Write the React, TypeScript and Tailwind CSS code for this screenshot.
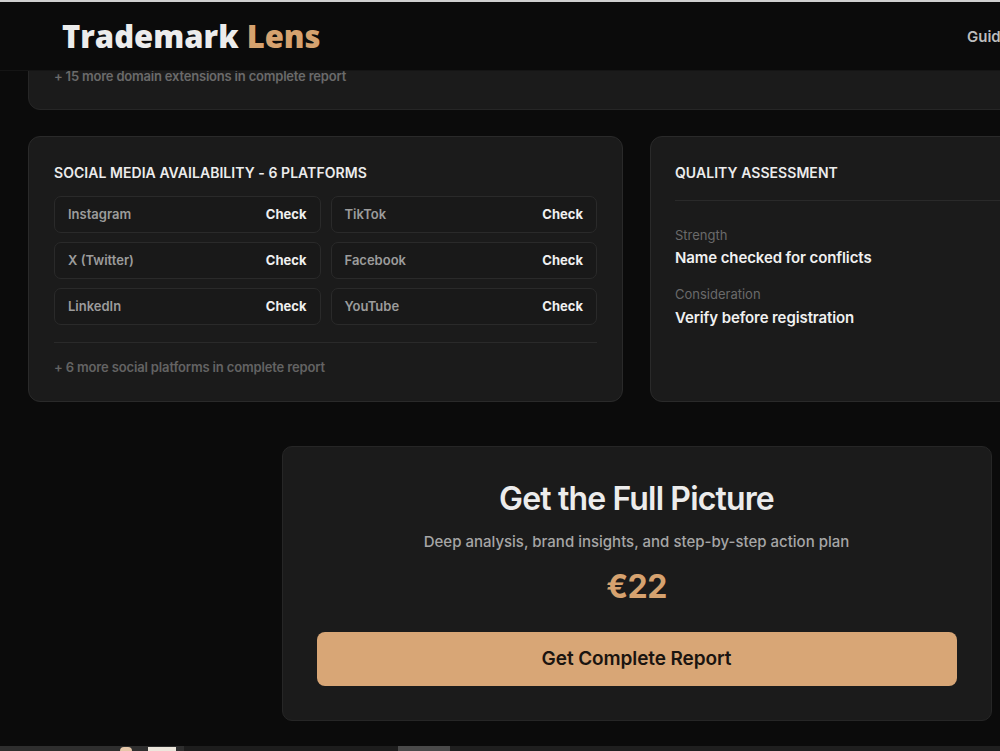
import React from "react";

const platforms = [
  ["Instagram", "TikTok"],
  ["X (Twitter)", "Facebook"],
  ["LinkedIn", "YouTube"],
];

function PlatformRow({ name }: { name: string }) {
  return (
    <div className="flex h-[37px] items-center justify-between rounded-[7px] border border-[#2a2a2a] bg-[#191919] pl-[13px] pr-[13px]">
      <span className="text-[13px] font-semibold text-[#9c9c9c]">{name}</span>
      <span className="text-[13px] font-bold text-[#f0f0f0]">Check</span>
    </div>
  );
}

export default function App() {
  return (
    <div
      className="relative flex h-[751px] w-[1000px] flex-col overflow-hidden bg-[#0b0b0b]"
      style={{ fontFamily: "Inter, 'Noto Sans', sans-serif" }}
    >
      {/* browser chrome edge */}
      <div className="h-[2px] w-full shrink-0 bg-[#cfcfcf]" />

      {/* top navigation */}
      <header className="relative z-10 flex h-[68px] w-[1273px] shrink-0 items-center bg-[#0b0b0b] pl-[62px] shadow-[0_1px_0_#151515]">
        <div className="w-[905px]">
          <span
            className="text-[31px] font-extrabold"
            style={{ fontFamily: "'Open Sans', Inter, sans-serif" }}
          >
            <span className="text-[#ececec]">Trademark</span>{" "}
            <span className="text-[#d6a26f]">Lens</span>
          </span>
        </div>
        <nav className="flex gap-8 pt-[2px] text-[15px] font-semibold text-[#bdbdbd]">
          <span>Guide</span>
          <span>Pricing</span>
        </nav>
      </header>

      <main className="-mt-[30px] flex w-[1273px] flex-1 flex-col px-[28px]">
        {/* domain card (scrolled under header) */}
        <section className="rounded-b-[12px] border border-[#262626] bg-[#1b1b1b] px-[25px] pb-[24px] pt-[26px]">
          <p className="text-[13px] font-semibold leading-[18px] tracking-[-0.2px] text-[#6a6a6a]">
            + 15 more domain extensions in complete report
          </p>
        </section>

        <div className="mt-[26px] grid grid-cols-2 gap-[27px]">
          {/* social media availability */}
          <section className="rounded-[12px] border border-[#2a2a2a] bg-[#1b1b1b] px-[25px] pb-[25px] pt-[26px]">
            <h2 className="text-[14px] font-semibold uppercase leading-[20px] tracking-[0.05px] text-[#ececec]">
              Social Media Availability - 6 Platforms
            </h2>
            <div className="mt-[13px] grid grid-cols-2 gap-x-[10px] gap-y-[9px]">
              {platforms.map(([a, b]) => (
                <React.Fragment key={a}>
                  <PlatformRow name={a} />
                  <PlatformRow name={b} />
                </React.Fragment>
              ))}
            </div>
            <div className="mt-[17px] border-t border-[#2a2a2a] pt-[15px]">
              <p className="text-[13px] font-semibold leading-[18px] tracking-[-0.15px] text-[#636363]">
                + 6 more social platforms in complete report
              </p>
            </div>
          </section>

          {/* quality assessment */}
          <section className="rounded-[12px] border border-[#2a2a2a] bg-[#1b1b1b] pl-[24px] pr-[25px] pt-[26px]">
            <h2 className="text-[14px] font-semibold uppercase leading-[20px] tracking-[0.05px] text-[#ececec]">
              Quality Assessment
            </h2>
            <div className="mt-[17px] border-t border-[#2a2a2a] pt-[25px]">
              <p className="text-[13px] leading-[18px] text-[#6a6a6a]">Strength</p>
              <p className="mt-[3px] text-[15px] font-semibold leading-[22px] tracking-[-0.1px] text-[#f0f0f0]">
                Name checked for conflicts
              </p>
              <p className="mt-[16px] text-[13px] leading-[18px] text-[#6a6a6a]">Consideration</p>
              <p className="mt-[4px] text-[15px] font-semibold leading-[22px] tracking-[-0.1px] text-[#f0f0f0]">
                Verify before registration
              </p>
            </div>
          </section>
        </div>

        {/* upsell */}
        <section className="mx-auto mt-[44px] flex w-[710px] flex-col items-center rounded-[10px] border border-[#262626] bg-[#1b1b1b] px-[34px] pb-[34px] pt-[32px]">
          <h2 className="text-[32px] font-semibold leading-[40px] tracking-[-0.85px] text-[#ececec]">
            Get the Full Picture
          </h2>
          <p className="mt-[12px] text-[15px] font-medium leading-[22px] text-[#a6a6a6]">
            Deep analysis, brand insights, and step-by-step action plan
          </p>
          <p className="mt-[12px] text-[32px] font-bold leading-[44px] tracking-[-0.5px] text-[#d6a26f]">
            €22
          </p>
          <button className="mt-[23px] flex h-[54px] w-full items-center justify-center rounded-[8px] bg-[#d8a676] text-[19px] font-semibold tracking-[-0.1px] text-[#1a1410]">
            Get Complete Report
          </button>
        </section>
      </main>

      {/* taskbar strip */}
      <div className="flex h-[5px] w-full shrink-0">
        <div className="relative flex w-[184px] items-start bg-[#2e2e2e]">
          <span className="ml-[120px] mt-[1px] h-[4px] w-[12px] rounded-t-full bg-[#e5c7a8]" />
          <span className="ml-[16px] mt-[1px] h-[4px] w-[28px] bg-[#ece6dc]" />
        </div>
        <div className="w-[214px] bg-[#1d1d1d]" />
        <div className="w-[52px] bg-[#4a4a4a]" />
        <div className="flex-1 bg-[#1f1f1f]" />
      </div>
    </div>
  );
}
